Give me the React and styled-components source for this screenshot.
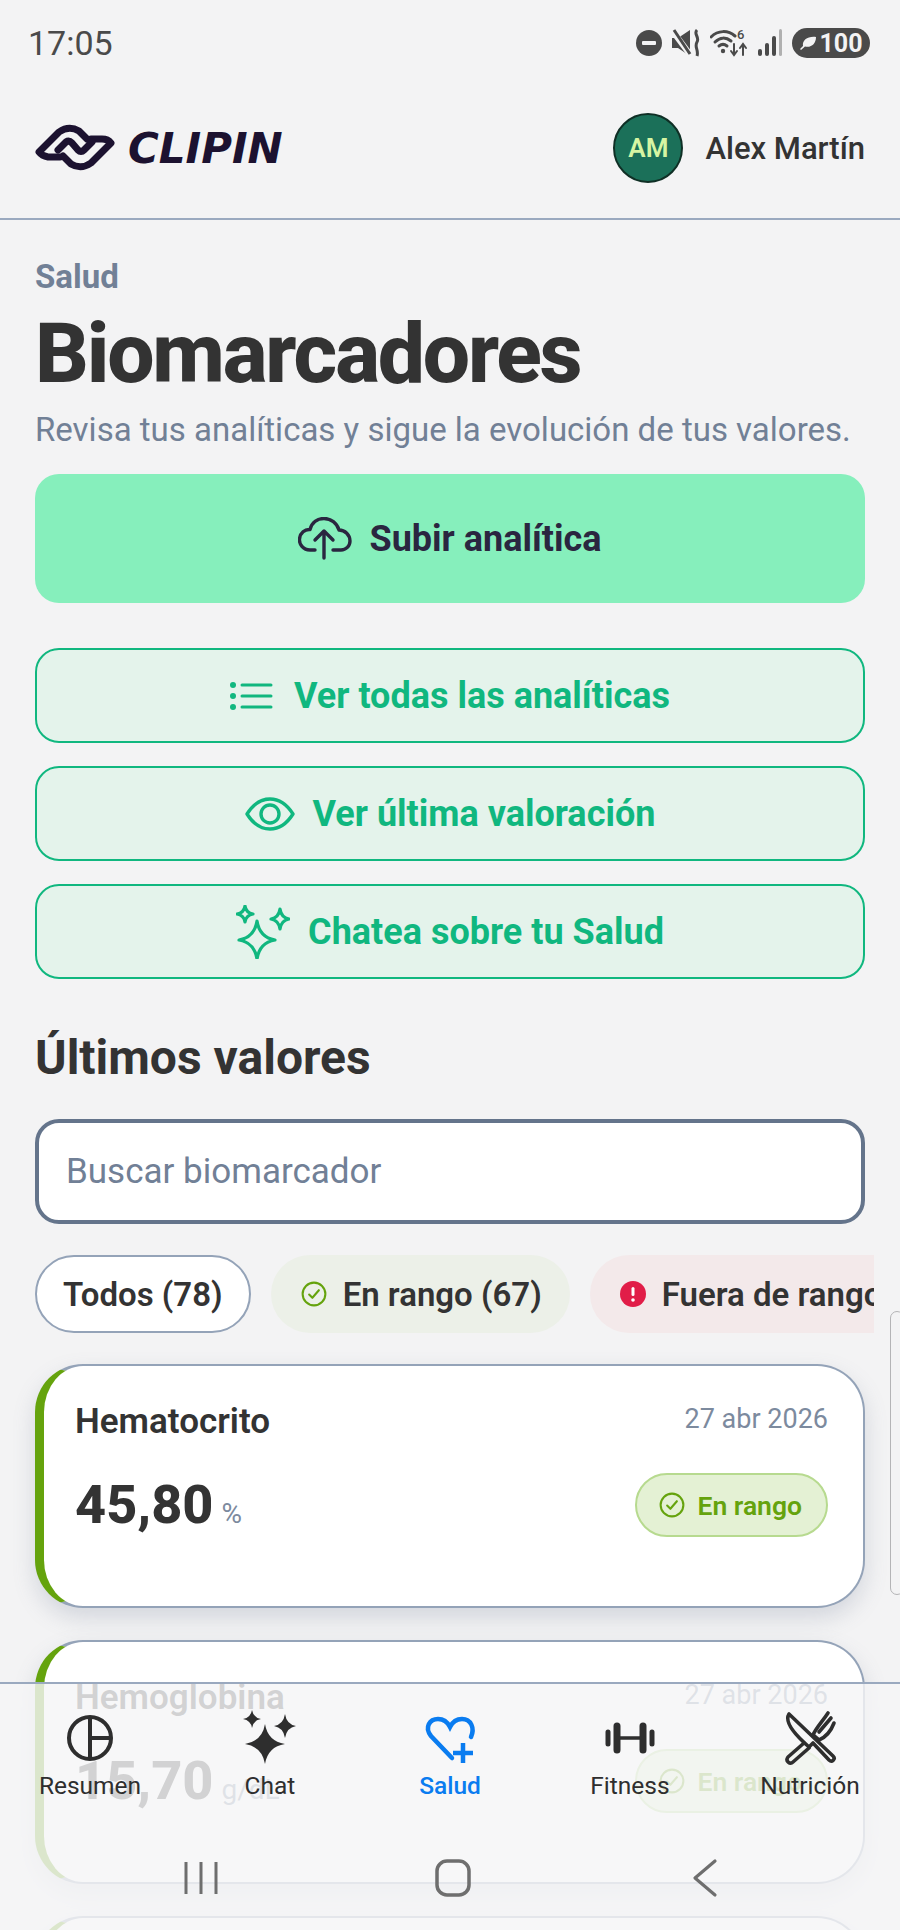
import React from 'react'
import styled, { createGlobalStyle } from 'styled-components'

const GlobalStyle = createGlobalStyle`
  html, body {
    margin: 0;
    padding: 0;
    background: #f3f3f4;
    font-family: Roboto, "Noto Sans", sans-serif;
  }
  * {
    box-sizing: border-box;
  }
`

const Page = styled.div`
  position: relative;
  width: 900px;
  height: 1930px;
  overflow: hidden;
  background: #f3f3f4;
  color: #333;
`

const StatusBar = styled.div`
  display: flex;
  align-items: center;
  justify-content: space-between;
  height: 86px;
  padding: 0 30px 0 28px;
`

const Clock = styled.span`
  font-size: 34px;
  color: #4a4a4a;
`

const StatusIcons = styled.div`
  display: flex;
  align-items: center;
  gap: 9px;
  color: #4a4a4a;
`

const Battery = styled.div`
  display: flex;
  align-items: center;
  justify-content: center;
  gap: 2px;
  width: 78px;
  height: 30px;
  border-radius: 15px;
  background: #4a4a4a;
  color: #f3f3f4;
  font-size: 25px;
  font-weight: 700;
`

const Header = styled.header`
  display: flex;
  align-items: center;
  justify-content: space-between;
  height: 134px;
  padding: 0 35px 8px;
  border-bottom: 2px solid #9aa9bf;
`

const Logo = styled.div`
  display: flex;
  align-items: center;
  gap: 13px;
  color: #1c1230;
`

const LogoText = styled.span`
  font-family: "DejaVu Sans", sans-serif;
  font-size: 42px;
  font-weight: 700;
  font-style: italic;
`

const User = styled.div`
  display: flex;
  align-items: center;
  gap: 22px;
`

const Avatar = styled.div`
  display: flex;
  align-items: center;
  justify-content: center;
  width: 70px;
  height: 70px;
  border-radius: 50%;
  border: 2px solid #0f2f25;
  background: #1b7059;
  color: #d6f5a3;
  font-size: 26px;
  font-weight: 600;
`

const UserName = styled.span`
  font-size: 31px;
  font-weight: 500;
`

const Main = styled.main`
  display: flex;
  flex-direction: column;
  padding: 39px 35px 0;
`

const Eyebrow = styled.div`
  font-size: 33px;
  line-height: 36px;
  font-weight: 700;
  color: #718096;
`

const Title = styled.h1`
  margin: 17px 0 0;
  font-size: 84px;
  line-height: 84px;
  font-weight: 800;
  letter-spacing: -2.2px;
`

const Subtitle = styled.p`
  margin: 14px 0 0;
  font-size: 33px;
  line-height: 40px;
  color: #718096;
  white-space: nowrap;
`

const PrimaryButton = styled.div`
  display: flex;
  align-items: center;
  justify-content: center;
  gap: 17px;
  height: 129px;
  margin-top: 24px;
  border-radius: 24px;
  background: #86efbc;
  color: #2a2640;
  font-size: 36px;
  font-weight: 700;
`

const ActionList = styled.div`
  display: flex;
  flex-direction: column;
  gap: 23px;
  margin-top: 45px;
`

const ActionButton = styled.div`
  display: flex;
  align-items: center;
  justify-content: center;
  gap: 18px;
  height: 95px;
  border: 2px solid #10b77f;
  border-radius: 24px;
  background: #e4f3eb;
  color: #10b77f;
  font-size: 36px;
  font-weight: 700;
`

const SectionTitle = styled.h2`
  margin: 51px 0 0;
  font-size: 48px;
  line-height: 56px;
  font-weight: 700;
`

const SearchBox = styled.div`
  display: flex;
  align-items: center;
  height: 105px;
  margin-top: 33px;
  padding: 0 27px;
  border: 4px solid #64748b;
  border-radius: 24px;
  background: #fff;
  color: #718096;
  font-size: 35px;
`

const ChipRow = styled.div`
  display: flex;
  gap: 20px;
  height: 78px;
  margin: 31px -9px 0 0;
  overflow: hidden;
`

const Chip = styled.div`
  display: flex;
  flex: none;
  align-items: center;
  gap: 16px;
  height: 78px;
  padding: ${(p) => (p.$active ? '0 26px' : '0 28px 0 30px')};
  border: ${(p) => (p.$active ? '2px solid #94a3b8' : 'none')};
  border-radius: 39px;
  background: ${(p) => p.$bg};
  font-size: 33px;
  font-weight: 600;
`

const CardList = styled.div`
  display: flex;
  flex-direction: column;
  gap: 32px;
  margin-top: 31px;
`

const Card = styled.article`
  display: flex;
  flex-direction: column;
  flex: none;
  height: 244px;
  padding: 35px 35px 0 31px;
  border: 2px solid #94a3b8;
  border-left: 9px solid #65a30d;
  border-radius: 48px;
  background: #fff;
  box-shadow: 0 10px 22px rgba(100, 116, 139, 0.22);
`

const CardTop = styled.div`
  display: flex;
  align-items: flex-start;
  justify-content: space-between;
`

const CardName = styled.div`
  font-size: 35px;
  line-height: 42px;
  font-weight: 600;
`

const CardDate = styled.div`
  font-size: 27px;
  line-height: 36px;
  color: #7c8a9e;
`

const CardBottom = styled.div`
  display: flex;
  align-items: flex-start;
  justify-content: space-between;
  margin-top: 30px;
`

const Value = styled.div`
  display: flex;
  align-items: baseline;
  gap: 8px;
  font-size: 54px;
  line-height: 64px;
  font-weight: 800;
`

const Unit = styled.span`
  font-size: 28px;
  line-height: 1;
  font-weight: 400;
  color: #7c8a9e;
`

const Badge = styled.div`
  display: flex;
  align-items: center;
  gap: 12px;
  height: 64px;
  padding: 0 24px 0 22px;
  border: 2px solid #b7da8f;
  border-radius: 32px;
  background: #e4f1d4;
  color: #65a30d;
  font-size: 26.500px;
  font-weight: 600;
`

const ScrollHandle = styled.div`
  position: absolute;
  top: 1311px;
  right: -4px;
  width: 14px;
  height: 284px;
  border: 1.5px solid #b4b4b6;
  border-radius: 8px;
  background: #f3f3f4;
`

const BottomNav = styled.nav`
  position: absolute;
  left: 0;
  right: 0;
  top: 1682px;
  bottom: 0;
  padding-top: 26px;
  border-top: 2px solid #9aa9bf;
  background: rgba(245, 245, 246, 0.82);
`

const NavItems = styled.div`
  display: grid;
  grid-template-columns: repeat(5, 180px);
`

const NavItem = styled.div`
  display: flex;
  flex-direction: column;
  align-items: center;
  gap: 5px;
  color: ${(p) => (p.$active ? '#0a7cf0' : '#2e2e2e')};
`

const NavLabel = styled.span`
  font-size: 24.500px;
  line-height: 30px;
  font-weight: ${(p) => (p.$active ? 500 : 400)};
`

const SystemBar = styled.div`
  display: flex;
  justify-content: center;
  gap: 212px;
  margin-top: 57px;
  padding-left: 6px;
  color: #6e6e6e;
`

const star = (x, y, rx, ry) => {
  const cx = rx * 0.14
  const cy = ry * 0.14
  return `M${x} ${y - ry}Q${x + cx} ${y - cy} ${x + rx} ${y}Q${x + cx} ${y + cy} ${x} ${y + ry}Q${x - cx} ${y + cy} ${x - rx} ${y}Q${x - cx} ${y - cy} ${x} ${y - ry}Z`
}

const LogoMark = () => (
  <svg width="80" height="48" viewBox="0 0 80 48" fill="none" stroke="currentColor" strokeWidth="7" strokeLinejoin="round" strokeLinecap="round">
    <path d="M25 33H13Q7 32 4 28L24 8Q34 1 44 7L52 15" />
    <path d="M56 15H67Q73 15 76 19L56 39Q46 46 36 40L28 32" />
    <path d="M23 26L31 18Q34 16 37 19L43 26Q46 29 49 26L57 18" />
  </svg>
)

const DndIcon = () => (
  <svg width="26" height="26" viewBox="0 0 26 26">
    <circle cx="13" cy="13" r="13" fill="currentColor" />
    <rect x="6" y="11" width="14" height="4" rx="1" fill="#f3f3f4" />
  </svg>
)

const MuteIcon = () => (
  <svg width="30" height="28" viewBox="0 0 30 28" fill="none">
    <path d="M1 9H7L19 1V27L7 19H1Z" fill="currentColor" />
    <path d="M0 0L21 28" stroke="#f3f3f4" strokeWidth="6" />
    <path d="M3 1L19 25" stroke="currentColor" strokeWidth="3" />
    <path d="M26 1C22 5 29 8 26 13C23 18 28 21 26 27" stroke="currentColor" strokeWidth="3" />
  </svg>
)

const WifiIcon = () => (
  <svg width="38" height="30" viewBox="0 0 38 30" fill="none" stroke="currentColor" strokeWidth="3" strokeLinecap="round">
    <path d="M1 9C8 2 18 2 25 8" />
    <path d="M5 14C10 9 16 9 21 13" />
    <path d="M9 18C11.500 16 14.500 16 17 18" />
    <circle cx="13" cy="23" r="2.200" fill="currentColor" stroke="none" />
    <path d="M24 16V26M21 23L24 27L27 23" strokeWidth="2" />
    <path d="M33 27V17M30 20L33 16L36 20" strokeWidth="2" />
    <text x="27" y="11" fontSize="13" fontWeight="500" fill="currentColor" stroke="none" fontFamily="Roboto, sans-serif">6</text>
  </svg>
)

const SignalIcon = () => (
  <svg width="26" height="28" viewBox="0 0 26 28" fill="currentColor">
    <rect x="1" y="20" width="4" height="7" rx="2" />
    <rect x="8" y="14" width="4" height="13" rx="2" />
    <rect x="15" y="7" width="4" height="20" rx="2" />
    <rect x="22" y="0" width="3" height="27" rx="1.500" opacity="0.4" />
  </svg>
)

const LeafIcon = () => (
  <svg width="18" height="16" viewBox="0 0 18 16" fill="currentColor">
    <path d="M4 11C3 5 9 1 17 2C17 9 12 13 6 11.500L2 15L1 14L4 11Z" />
  </svg>
)

const CloudUpIcon = () => (
  <svg width="54" height="44" viewBox="0 0 54 44" fill="none" stroke="currentColor" strokeWidth="3.400" strokeLinecap="round" strokeLinejoin="round">
    <path d="M17 33H12C5 33 1 27 1.500 22C2 16 7 12 12 12.500C14 5 20 1.500 26 1.500C33 1.500 39 6 41 13C47 13 52 18 52 24C52 29 48 33 43 33H35" />
    <path d="M26 41V14M17 23L26 14L35 23" />
  </svg>
)

const ListIcon = () => (
  <svg width="46" height="28" viewBox="0 0 46 28" fill="none" stroke="currentColor" strokeWidth="3" strokeLinecap="round">
    <path d="M12 3H41M12 14H41M12 25H41" />
    <circle cx="3" cy="3" r="3" fill="currentColor" stroke="none" />
    <circle cx="3" cy="14" r="3" fill="currentColor" stroke="none" />
    <circle cx="3" cy="25" r="3" fill="currentColor" stroke="none" />
  </svg>
)

const EyeIcon = () => (
  <svg width="50" height="34" viewBox="0 0 50 34" fill="none" stroke="currentColor" strokeWidth="3.400" strokeLinejoin="round">
    <path d="M2 17C9 6 17 2 25 2C33 2 41 6 48 17C41 28 33 32 25 32C17 32 9 28 2 17Z" />
    <circle cx="25" cy="17" r="9" />
  </svg>
)

const SparkleIcon = () => (
  <svg width="54" height="54" viewBox="0 0 54 54" fill="none" stroke="currentColor" strokeWidth="3.200" strokeLinejoin="round">
    <path d={star(21, 35, 18, 19)} />
    <path d={star(9, 9, 8, 8)} />
    <path d={star(44, 14, 9, 10)} />
  </svg>
)

const CheckCircle = ({ size }) => (
  <svg width={size} height={size} viewBox="0 0 24 24" fill="none" stroke="#65a30d" strokeWidth="1.900" strokeLinecap="round" strokeLinejoin="round">
    <circle cx="12" cy="12" r="10.500" />
    <path d="M7.500 12.500L10.500 15.500L16.500 8.500" />
  </svg>
)

const AlertCircle = () => (
  <svg width="26" height="26" viewBox="0 0 26 26">
    <circle cx="13" cy="13" r="13" fill="#e11d48" />
    <rect x="11.500" y="6" width="3" height="9" rx="1.500" fill="#fff" />
    <circle cx="13" cy="19" r="1.800" fill="#fff" />
  </svg>
)

const ResumenIcon = () => (
  <svg width="56" height="56" viewBox="0 0 56 56" fill="none" stroke="currentColor" strokeWidth="4">
    <circle cx="28" cy="28" r="21" />
    <path d="M28 7V49M28 28H49" />
  </svg>
)

const ChatIcon = () => (
  <svg width="56" height="56" viewBox="0 0 56 56" fill="currentColor">
    <path d={star(23, 34, 20, 20)} />
    <path d={star(10, 9, 9, 9)} />
    <path d={star(43, 16, 11, 12)} />
  </svg>
)

const SaludIcon = () => (
  <svg width="56" height="56" viewBox="0 0 56 56" fill="none" stroke="currentColor" strokeWidth="4.500">
    <path d="M30 48L9 26C2 17 8 9 16 9C22 9 26 13 28 17C30 13 34 9 40 9C49 9 53 18 49 27" strokeLinecap="round" />
    <path d="M41 33V53M31 43H51" />
  </svg>
)

const FitnessIcon = () => (
  <svg width="56" height="56" viewBox="0 0 56 56" fill="none" stroke="currentColor" strokeLinecap="round">
    <path d="M6 22V34M50 22V34" strokeWidth="5" />
    <path d="M15 16V40M41 16V40" strokeWidth="7" />
    <path d="M16 28H40" strokeWidth="3.500" />
  </svg>
)

const NutricionIcon = () => (
  <svg width="56" height="56" viewBox="0 0 56 56" fill="none" stroke="currentColor" strokeWidth="3.600" strokeLinecap="round" strokeLinejoin="round">
    <path d="M7 4C2 12 12 24 27 37L31 33L47 50C50 53 54 49 51 46Z" />
    <path d="M22 33L6 47C3 51 8 55 11 52L27 38" />
    <path d="M31 25L37 30C44 27 49 21 52 13" />
    <path d="M31 25C34 18 40 12 46 3M37 22L49 8" />
  </svg>
)

const actions = [
  { label: 'Ver todas las analíticas', icon: <ListIcon /> },
  { label: 'Ver última valoración', icon: <EyeIcon /> },
  { label: 'Chatea sobre tu Salud', icon: <SparkleIcon /> },
]

const biomarkers = [
  { name: 'Hematocrito', value: '45,80', unit: '%' },
  { name: 'Hemoglobina', value: '15,70', unit: 'g/dL' },
]

const navItems = [
  { label: 'Resumen', icon: <ResumenIcon /> },
  { label: 'Chat', icon: <ChatIcon /> },
  { label: 'Salud', icon: <SaludIcon />, active: true },
  { label: 'Fitness', icon: <FitnessIcon /> },
  { label: 'Nutrición', icon: <NutricionIcon /> },
]

export default function App() {
  return (
    <Page>
      <GlobalStyle />
      <StatusBar>
        <Clock>17:05</Clock>
        <StatusIcons>
          <DndIcon />
          <MuteIcon />
          <WifiIcon />
          <SignalIcon />
          <Battery>
            <LeafIcon />
            100
          </Battery>
        </StatusIcons>
      </StatusBar>

      <Header>
        <Logo>
          <LogoMark />
          <LogoText>CLIPIN</LogoText>
        </Logo>
        <User>
          <Avatar>AM</Avatar>
          <UserName>Alex Martín</UserName>
        </User>
      </Header>

      <Main>
        <Eyebrow>Salud</Eyebrow>
        <Title>Biomarcadores</Title>
        <Subtitle>Revisa tus analíticas y sigue la evolución de tus valores.</Subtitle>

        <PrimaryButton>
          <CloudUpIcon />
          Subir analítica
        </PrimaryButton>

        <ActionList>
          {actions.map((action) => (
            <ActionButton key={action.label}>
              {action.icon}
              {action.label}
            </ActionButton>
          ))}
        </ActionList>

        <SectionTitle>Últimos valores</SectionTitle>
        <SearchBox>Buscar biomarcador</SearchBox>

        <ChipRow>
          <Chip $active $bg="#fff">Todos (78)</Chip>
          <Chip $bg="#ecf0e8">
            <CheckCircle size={26} />
            En rango (67)
          </Chip>
          <Chip $bg="#f3e9ea">
            <AlertCircle />
            Fuera de rango
          </Chip>
        </ChipRow>

        <CardList>
          {biomarkers.map((item) => (
            <Card key={item.name}>
              <CardTop>
                <CardName>{item.name}</CardName>
                <CardDate>27 abr 2026</CardDate>
              </CardTop>
              <CardBottom>
                <Value>
                  {item.value}
                  <Unit>{item.unit}</Unit>
                </Value>
                <Badge>
                  <CheckCircle size={26} />
                  En rango
                </Badge>
              </CardBottom>
            </Card>
          ))}
          <Card />
        </CardList>
      </Main>

      <ScrollHandle />

      <BottomNav>
        <NavItems>
          {navItems.map((item) => (
            <NavItem key={item.label} $active={item.active}>
              {item.icon}
              <NavLabel $active={item.active}>{item.label}</NavLabel>
            </NavItem>
          ))}
        </NavItems>
        <SystemBar>
          <svg width="40" height="40" viewBox="0 0 40 40" fill="none" stroke="currentColor" strokeWidth="3">
            <path d="M5 4V36M20 4V36M35 4V36" />
          </svg>
          <svg width="40" height="40" viewBox="0 0 40 40" fill="none" stroke="currentColor" strokeWidth="3.500">
            <rect x="4" y="3" width="32" height="34" rx="10" />
          </svg>
          <svg width="40" height="40" viewBox="0 0 40 40" fill="none" stroke="currentColor" strokeWidth="3.200" strokeLinecap="round" strokeLinejoin="round">
            <path d="M30 3L10 20L30 37" />
          </svg>
        </SystemBar>
      </BottomNav>
    </Page>
  )
}
